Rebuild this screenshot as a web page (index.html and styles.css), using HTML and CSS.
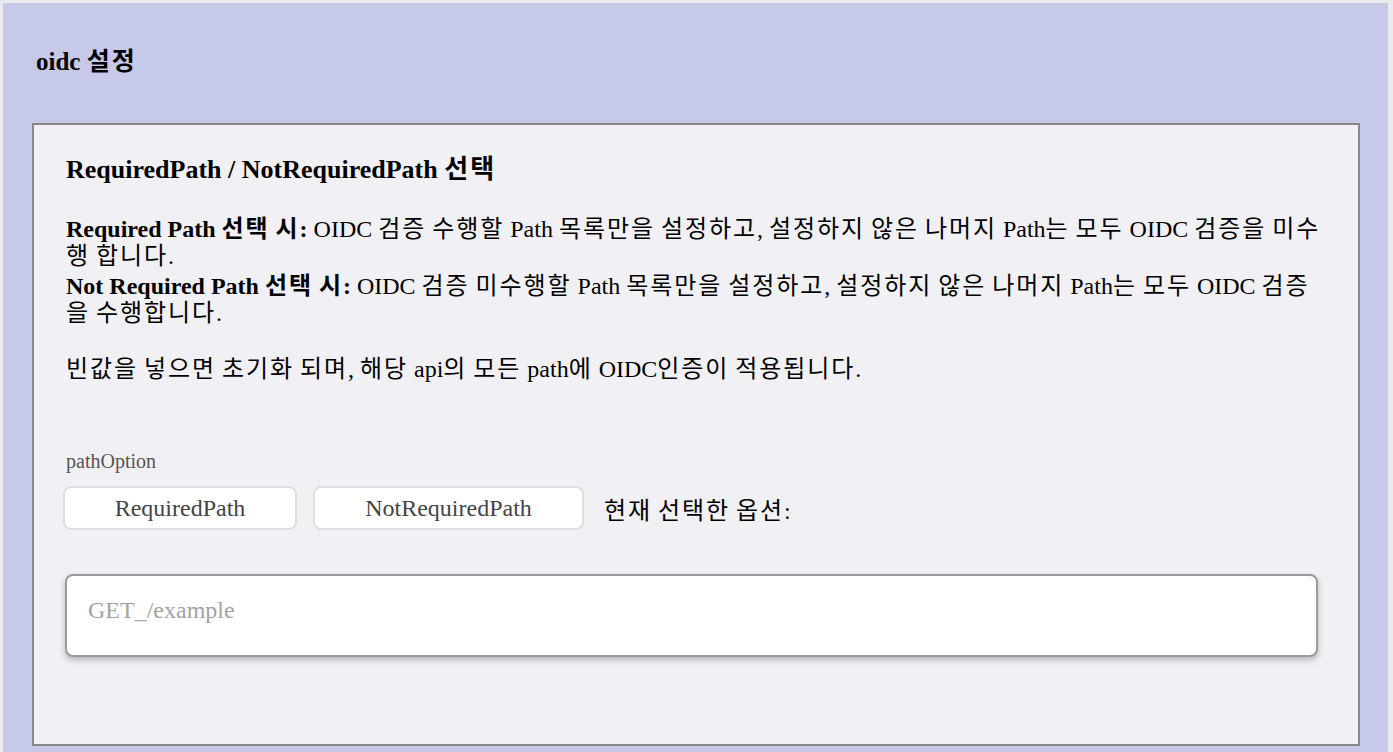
FILE: index.html
```html
<!DOCTYPE html>
<html lang="ko">
<head>
    <meta charset="UTF-8">
    <meta name="viewport" content="width=device-width, initial-scale=1.0">
    <title>oidc 설정</title>
    <link rel="stylesheet" href="styles.css">
</head>
<body>
    <div class="panel">
        <h2 class="title">oidc <span class="ko">설정</span></h2>
        <div class="card">
            <h3 class="card-title">RequiredPath / NotRequiredPath <span class="ko">선택</span></h3>
            <div class="desc">
                <p><strong>Required Path <span class="ko">선택 시</span>:</strong> OIDC <span class="ko">검증 수행할</span> Path <span class="ko">목록만을 설정하고</span>, <span class="ko">설정하지 않은 나머지</span> Path<span class="ko">는 모두</span> OIDC <span class="ko">검증을 미수행 합니다</span>.</p>
                <p class="second"><strong>Not Required Path <span class="ko">선택 시</span>:</strong> OIDC <span class="ko">검증 미수행할</span> Path <span class="ko">목록만을 설정하고</span>, <span class="ko">설정하지 않은 나머지</span> Path<span class="ko">는 모두</span> OIDC <span class="ko">검증을 수행합니다</span>.</p>
                <p class="note"><span class="ko">빈값을 넣으면 초기화 되며</span>, <span class="ko">해당</span> api<span class="ko">의 모든</span> path<span class="ko">에</span> OIDC<span class="ko">인증이 적용됩니다</span>.</p>
            </div>

            <div class="field-label">pathOption</div>
            <div class="options">
                <button type="button" class="option-btn btn-required">RequiredPath</button>
                <button type="button" class="option-btn btn-not-required">NotRequiredPath</button>
                <span class="current"><span class="ko">현재 선택한 옵션</span>:</span>
            </div>

            <textarea class="path-input" placeholder="GET_/example"></textarea>
        </div>
    </div>
</body>
</html>
```

FILE: styles.css
```css
body {
    font-family: 'Liberation Serif', 'Noto Sans CJK KR', serif;
    margin: 3px 5px 0 3px;
    background-color: #ebebef;
    color: #000;
}
/* hangul runs: the CJK fallback is narrower than the original font */
.ko {
    letter-spacing: 0.08em;
    word-spacing: -0.08em;
}
.panel {
    background-color: #c6c9e8;
    padding: 0 28px 6px 29px;
}
.title {
    font-size: 25px;
    font-weight: 700;
    line-height: 30px;
    margin: 0 0 46px 4px;
    padding-top: 44px;
}
.card {
    background-color: #f1f0f5;
    border: 2px solid #878787;
    padding: 30px 30px 87px 32px;
}
.card-title {
    font-size: 26px;
    font-weight: 700;
    line-height: 30px;
    margin: 0 0 31px 0;
}
.desc p {
    font-size: 24px;
    line-height: 27px;
    margin: 0;
}
.desc .second {
    margin-top: 3px;
}
.desc .note {
    margin-top: 29px;
}
.field-label {
    font-size: 20px;
    line-height: 23px;
    color: #555;
    margin-top: 67px;
}
.options {
    display: flex;
    align-items: center;
    margin-top: 13px;
    margin-left: -3px;
}
.option-btn {
    font-family: inherit;
    font-size: 24px;
    color: #444;
    background-color: #fff;
    border: 2px solid #dedede;
    border-radius: 8px;
    height: 44px;
    padding: 0;
    margin-right: 16px;
}
.btn-required {
    width: 234px;
}
.btn-not-required {
    width: 271px;
    margin-right: 20px;
}
.current {
    font-size: 24px;
}
.path-input {
    display: block;
    box-sizing: border-box;
    width: calc(100% - 9px);
    height: 83px;
    margin: 44px 0 0 -1px;
    padding: 20px 21px;
    font-family: inherit;
    font-size: 24px;
    line-height: 28px;
    border: 2px solid #9a9a9a;
    border-radius: 8px;
    background-color: #fff;
    box-shadow: 0 3px 6px rgba(0, 0, 0, 0.25);
    resize: none;
    outline: none;
}
.path-input::placeholder {
    color: #a3a3a3;
}
```
